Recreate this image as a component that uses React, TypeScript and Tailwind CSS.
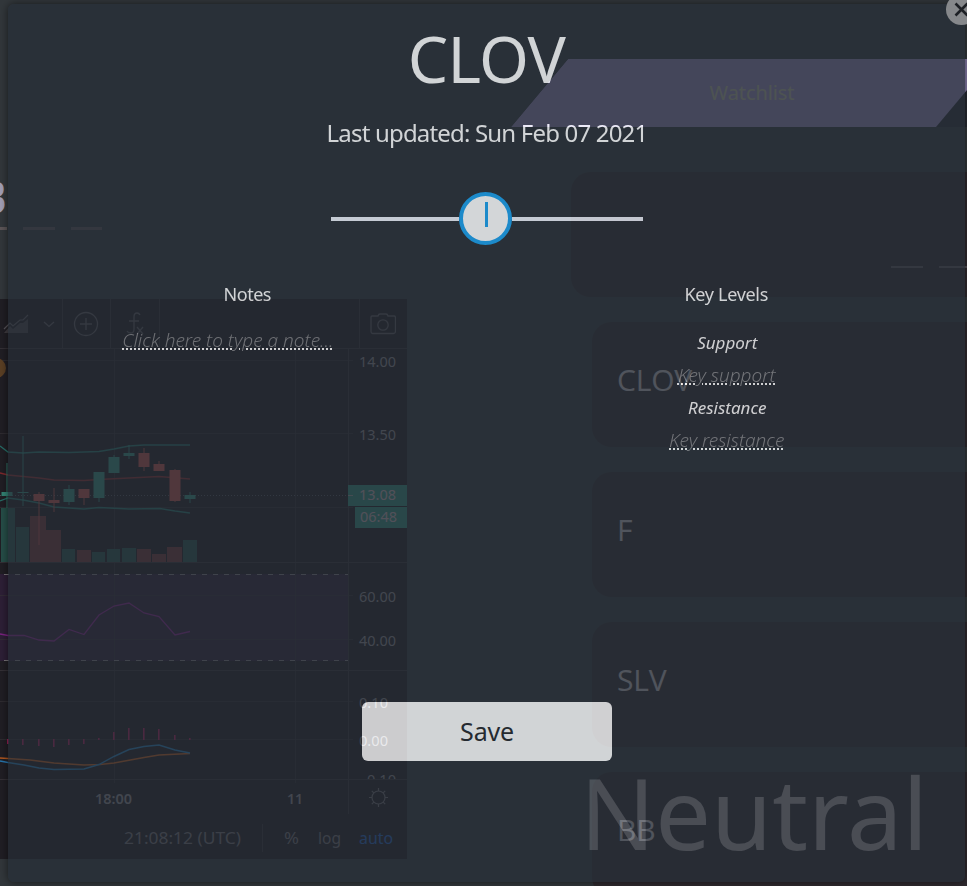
import React from "react";

type Candle = { x: number; hi: number; lo: number; top: number; bottom: number; up: boolean };
type Bar = { x: number; w: number; top: number; up: boolean };

const UP = "#32b49e";
const DOWN = "#f0605c";
const GRID = "#34343e";
const AXIS_FONT = "'Noto Sans', 'Open Sans', sans-serif";

const candles: Candle[] = [
  { x: 7, hi: 463, lo: 508, top: 492, bottom: 496, up: true },
  { x: 23, hi: 436, lo: 506, top: 492, bottom: 493, up: true },
  { x: 39, hi: 492, lo: 545, top: 494, bottom: 501, up: false },
  { x: 54, hi: 488, lo: 512, top: 500, bottom: 503, up: false },
  { x: 69, hi: 485, lo: 505, top: 489, bottom: 502, up: true },
  { x: 84, hi: 489, lo: 505, top: 489, bottom: 498, up: false },
  { x: 99, hi: 472, lo: 502, top: 472, bottom: 498, up: true },
  { x: 114, hi: 455, lo: 473, top: 457, bottom: 473, up: true },
  { x: 129, hi: 445, lo: 459, top: 453, bottom: 456, up: true },
  { x: 144, hi: 448, lo: 471, top: 453, bottom: 467, up: false },
  { x: 159, hi: 461, lo: 471, top: 464, bottom: 471, up: false },
  { x: 175, hi: 469, lo: 502, top: 470, bottom: 501, up: false },
  { x: 190, hi: 492, lo: 503, top: 495, bottom: 499, up: true },
];

const volume: Bar[] = [
  { x: 1, w: 14, top: 508, up: true },
  { x: 16, w: 13, top: 527, up: true },
  { x: 30, w: 16, top: 516, up: false },
  { x: 46, w: 15, top: 530, up: false },
  { x: 62, w: 13, top: 549, up: true },
  { x: 77, w: 14, top: 550, up: false },
  { x: 92, w: 13, top: 552, up: true },
  { x: 107, w: 13, top: 549, up: true },
  { x: 122, w: 14, top: 548, up: true },
  { x: 137, w: 14, top: 549, up: false },
  { x: 152, w: 14, top: 554, up: false },
  { x: 167, w: 15, top: 547, up: false },
  { x: 183, w: 14, top: 540, up: true },
];

const histogram: [number, number, number][] = [
  [8, 739, 744], [23, 739, 745], [39, 739, 746], [54, 739, 747], [69, 739, 745],
  [84, 739, 744], [99, 738, 740], [114, 732, 740], [129, 728, 740], [144, 728, 740],
  [159, 729, 740], [175, 735, 740], [190, 738, 740],
];

function AxisLabel({ x, y, w, children, fill = "#a8a8b4", bold = false }: { x: number; y: number; w: number; children: string; fill?: string; bold?: boolean }) {
  return (
    <text x={x} y={y} textLength={w} lengthAdjust="spacingAndGlyphs" fontSize="15" fontWeight={bold ? 600 : 400} fill={fill}>
      {children}
    </text>
  );
}

function Chart() {
  return (
    <svg className="block" width="407" height="511" viewBox="0 348 407 511" fontFamily={AXIS_FONT}>
      <rect x="0" y="574" width="348" height="87" fill="#281a3e" />
      <g stroke={GRID} strokeWidth="1" shapeRendering="crispEdges">
        <path d="M0 360.5H353M0 433.5H353M0 507.5H353M0 595.5H353M0 639.5H353M0 701.5H353M0 739.5H353" opacity=".7" />
        <path d="M114.5 348V783M295.5 348V783" opacity=".7" />
        <path d="M0 562.5H407M0 670.5H407M0 779.5H407M0 348.5H407M348.5 348V814" />
        <path d="M262.5 824V852" />
      </g>
      <path d="M4 574.5H348M4 660.5H348" stroke="#9c9ca4" strokeDasharray="5 6" shapeRendering="crispEdges" />
      {volume.map((b) => (
        <rect key={b.x} x={b.x} y={b.top} width={b.w} height={562 - b.top} fill={b.up ? "#1e6259" : "#80373c"} />
      ))}
      <path d="M0 495.5H348" stroke="#5d6673" strokeDasharray="1 2" shapeRendering="crispEdges" />
      <g fill="none" strokeWidth="1.3">
        <path d="M0 446L8 452L23 453L39 452L69 452.5L99 451.5L114 449L129 446L144 445L190 445" stroke="#1f8f88" />
        <path d="M0 473L8 475L39 478L54 480L84 480.500L99 479.500L129 478L159 476.500L190 479" stroke="#a3292f" />
        <path d="M0 501L8 498L23 500L39 503L54 507L69 508L84 509L99 507.500L129 509L160 508.500L175 511L190 513" stroke="#1f8f88" />
      </g>
      {candles.map((c) => (
        <g key={c.x} fill={c.up ? UP : DOWN}>
          <rect x={c.x - 0.75} y={c.hi} width="1.5" height={c.lo - c.hi} opacity=".6" />
          <rect x={c.x - 5.5} y={c.top} width="11" height={c.bottom - c.top} />
        </g>
      ))}
      <path d="M0 634L8 635.500L24 635.500L39 640L54 641L69 629.500L84 634.500L99 615L114 606L129 603L144 613L159 616.500L175 635L190 631.500" fill="none" stroke="#a01fb0" strokeWidth="1.3" />
      {histogram.map(([x, t, b]) => (
        <rect key={x} x={x - 1} y={t} width="1.6" height={b - t} fill="#d01a6e" />
      ))}
      <path d="M0 758L8 758.500L30 760L54 763L84 765L100 764.500L114 763L144 757.500L159 755L190 753.500" fill="none" stroke="#f4701c" strokeWidth="1.4" />
      <path d="M0 761L8 762.500L24 765L39 768L54 769.500L84 769L99 764.500L114 756.500L129 749.500L144 746.500L159 745L175 750L190 753" fill="none" stroke="#1f9bf0" strokeWidth="1.4" />
      <AxisLabel x={359} y={367} w={37}>14.00</AxisLabel>
      <AxisLabel x={359} y={440} w={37}>13.50</AxisLabel>
      <rect x="348" y="485" width="59" height="21" fill="#2fae9c" />
      <rect x="355" y="507" width="52" height="21" fill="#2fae9c" />
      <path d="M348 495.500H353" stroke="#b8c6c8" />
      <AxisLabel x={359} y={500} w={37} fill="#f4dde8">13.08</AxisLabel>
      <AxisLabel x={360} y={522} w={37} fill="#f4dde8">06:48</AxisLabel>
      <AxisLabel x={359} y={602} w={37}>60.00</AxisLabel>
      <AxisLabel x={359} y={646} w={37}>40.00</AxisLabel>
      <AxisLabel x={359} y={708} w={29}>0.10</AxisLabel>
      <AxisLabel x={359} y={746} w={29}>0.00</AxisLabel>
      <svg x="355" y="770" width="50" height="9" viewBox="355 770 50 9">
        <AxisLabel x={367} y={785} w={29}>0.10</AxisLabel>
        <path d="M361 781H366" stroke="#93939f" />
      </svg>
      <AxisLabel x={95} y={804} w={37} bold>18:00</AxisLabel>
      <AxisLabel x={287} y={804} w={16} bold>11</AxisLabel>
      <g fill="none" stroke="#82828c" strokeWidth="1.2">
        <circle cx="378.500" cy="797.500" r="6.500" />
        <path d="M378.500 788V791M378.500 804V807M369 797.500H372M385 797.500H388M371.800 790.800L373.800 792.800M383.200 802.200L385.200 804.200M371.800 804.200L373.800 802.200M383.200 792.800L385.200 790.800" />
      </g>
      <g fontSize="17">
        <text x="124" y="844" textLength="117" lengthAdjust="spacingAndGlyphs" fill="#888892">21:08:12 (UTC)</text>
        <text x="284" y="844" textLength="15" lengthAdjust="spacingAndGlyphs" fill="#888892">%</text>
        <text x="318" y="844" textLength="23" lengthAdjust="spacingAndGlyphs" fill="#888892">log</text>
        <text x="359" y="844" textLength="34" lengthAdjust="spacingAndGlyphs" fill="#1a76f8">auto</text>
      </g>
    </svg>
  );
}

function ChartToolbar() {
  const divider = "h-full w-px bg-[#34343e]";
  return (
    <div className="flex h-[49px] items-center text-[#686872]">
      <svg className="ml-[3px] shrink-0" width="26" height="22" viewBox="3 312 26 22" fill="none" stroke="currentColor">
        <path d="M4 328L10 322L13 325L20 319L23 319L28 314" strokeWidth="1.200" />
        <path d="M4 332L10 325L13 328L20 322L23 322L28 318V332Z" fill="currentColor" fillOpacity=".6" stroke="none" />
      </svg>
      <svg className="ml-[14px] shrink-0" width="12" height="8" viewBox="0 0 12 8" fill="none" stroke="currentColor" strokeWidth="1.300"><path d="M1 2L6 6.500L11 2" /></svg>
      <div className={"ml-[7px] " + divider} />
      <svg className="mx-[10px] shrink-0" width="26" height="26" viewBox="0 0 26 26" fill="none" stroke="currentColor" strokeWidth="1.300"><circle cx="13" cy="13" r="11.500" /><path d="M13 7V19M7 13H19" /></svg>
      <div className={"ml-[1px] " + divider} />
      <svg className="mx-[15px] shrink-0" width="18" height="24" viewBox="0 0 18 24" fill="none" stroke="currentColor" strokeWidth="1.300"><path d="M14 3Q13 1 11 1Q8 1 8 5V17Q8 21 5 21Q2 21 1 19M3 9H13M11 15L17 22M17 15L11 22" /></svg>
      <div className={divider} />
      <div className={"ml-[199px] " + divider} />
      <svg className="ml-[10px] shrink-0" width="26" height="22" viewBox="0 0 26 22" fill="none" stroke="currentColor" strokeWidth="1.300"><path d="M1 4Q1 3 2 3H8Q8.500 1 10 1H16Q17.500 1 18 3H24Q25.500 3 25.500 5V18Q25.500 20.500 23.500 20.500H3Q1 20.500 1 18Z" /><circle cx="13" cy="12" r="5.200" /></svg>
    </div>
  );
}

function Card({ label }: { label: string }) {
  return (
    <div className="ml-[81px] flex h-[125px] shrink-0 items-center rounded-l-[20px] bg-[#2b2a33] pl-[25px] pb-[11px] text-[30px] tracking-[-0.2px] text-[#ededf7]">
      {label}
    </div>
  );
}

function Dashboard() {
  return (
    <div className="flex h-[886px] w-[967px] overflow-hidden bg-[#313e46] font-['Open_Sans',sans-serif]">
      <div className="flex w-[407px] shrink-0 flex-col">
        <div className="flex h-[227px] items-end">
          <div className="-ml-[24px] pb-[5px] text-[46px] leading-[52px] font-bold text-[#dcdcff]">B</div>
        </div>
        <div className="flex h-[3px] gap-4">
          <div className="w-[7px] bg-[#706c70]" />
          <div className="w-8 bg-[#64606a]" />
          <div className="w-[31px] bg-[#64606a]" />
        </div>
        <div className="relative mt-[69px] h-[560px] bg-[#151722]">
          <ChartToolbar />
          <Chart />
          <div className="absolute top-[59px] -left-[14px] h-5 w-5 rounded-full bg-[#6e4a22]" />
        </div>
      </div>
      <div className="ml-[104px] flex w-[456px] shrink-0 flex-col">
        <div className="mt-[59px] h-[68px] shrink-0 bg-[#202b3a] [clip-path:polygon(57px_0,100%_0,100%_100%,0_100%)]">
          <div className="flex h-full w-[482px] items-center justify-center bg-[#b4aaee] font-['Noto_Sans',sans-serif] text-[20px] tracking-[-0.1px] text-[#e0e8c8] [clip-path:polygon(57px_0,100%_0,425px_100%,0_100%)]">
            Watchlist
          </div>
        </div>
        <div className="mt-[45px] ml-[60px] flex h-[125px] shrink-0 items-end justify-end gap-4 rounded-l-[20px] bg-[#2b2a33] pb-[29px]">
          <div className="h-0.5 w-8 bg-[#65656e]" />
          <div className="h-0.5 w-7 bg-[#65656e]" />
        </div>
        <div className="mt-[25px] flex flex-col gap-[25px]">
          <Card label="CLOV" />
          <Card label="F" />
          <Card label="SLV" />
          <Card label="BB" />
        </div>
      </div>
    </div>
  );
}

const dotted = "text-[19px] font-light text-[#85878a] italic underline decoration-[#fafafa] decoration-dotted decoration-2 underline-offset-[0.5px]";

function NoteModal() {
  return (
    <div className="absolute top-1 left-2 flex h-[878px] w-[957px] flex-col items-center overflow-hidden rounded-md bg-[#282d35] font-['Noto_Sans',sans-serif] text-[#fafafa]">
      <h1 className="mt-[20px] text-[64px] leading-[70px] tracking-[-0.7px]">CLOV</h1>
      <p className="mt-[21px] ml-[1px] text-[24px] leading-9 tracking-[-0.82px]">Last updated: Sun Feb 07 2021</p>
      <div className="mt-[41px] flex h-[53px] w-[312px] items-center">
        <div className="h-1 w-[128px] bg-[#eceff8]" />
        <div className="flex h-[53px] w-[53px] items-start justify-center rounded-full border-4 border-[#189eec] bg-[#fdfdfd] pt-[6px]">
          <div className="ml-[2px] h-[25px] w-[3px] bg-[#189eec]" />
        </div>
        <div className="h-1 flex-1 bg-[#eceff8]" />
      </div>
      <div className="mt-[37px] grid w-full grid-cols-2 text-center text-[18px] leading-6">
        <div className="flex flex-col items-center">
          <h2 className="font-[450] tracking-[-0.5px]">Notes</h2>
          <p className={"mt-[22px] mr-[39px] " + dotted}>Click here to type a note...</p>
        </div>
        <div className="flex flex-col items-center">
          <h2 className="ml-[1px] font-[450] tracking-[-0.3px]">Key Levels</h2>
          <h3 className="mt-[25px] ml-[3px] text-[17px] font-[450] italic">Support</h3>
          <p className={"mt-[8px] ml-[2px] " + dotted}>Key support</p>
          <h3 className="mt-[9px] ml-[3px] text-[17px] font-[450] italic">Resistance</h3>
          <p className={"mt-[8px] ml-[2px] " + dotted}>Key resistance</p>
        </div>
      </div>
      <button className="absolute top-[698px] left-[354px] h-[59px] w-[250px] rounded-md bg-[#fafafa] pt-px text-[25px] tracking-[-0.2px] text-[#23262b]">Save</button>
      <div className="absolute top-[740px] left-[572px] text-[99px] leading-[136px] text-white/20">Neutral</div>
    </div>
  );
}

export default function App() {
  return (
    <main className="relative h-[886px] w-[967px] overflow-hidden">
      <Dashboard />
      <div className="absolute top-1 left-2 h-[878px] w-[957px] rounded-md shadow-[0_0_8px_rgba(0,0,0,0.55),0_0_0_12px_rgba(55,44,40,0.35)]" />
      <div className="opacity-80">
        <NoteModal />
      </div>
      <div className="absolute -top-[6px] left-[946px] flex h-[31px] w-[31px] items-center justify-center rounded-full bg-[#86888b]">
        <svg width="15" height="15" viewBox="0 0 15 15" stroke="#1d2025" strokeWidth="2.600"><path d="M1.500 1.500L13.500 13.500M13.500 1.500L1.500 13.500" /></svg>
      </div>
    </main>
  );
}
